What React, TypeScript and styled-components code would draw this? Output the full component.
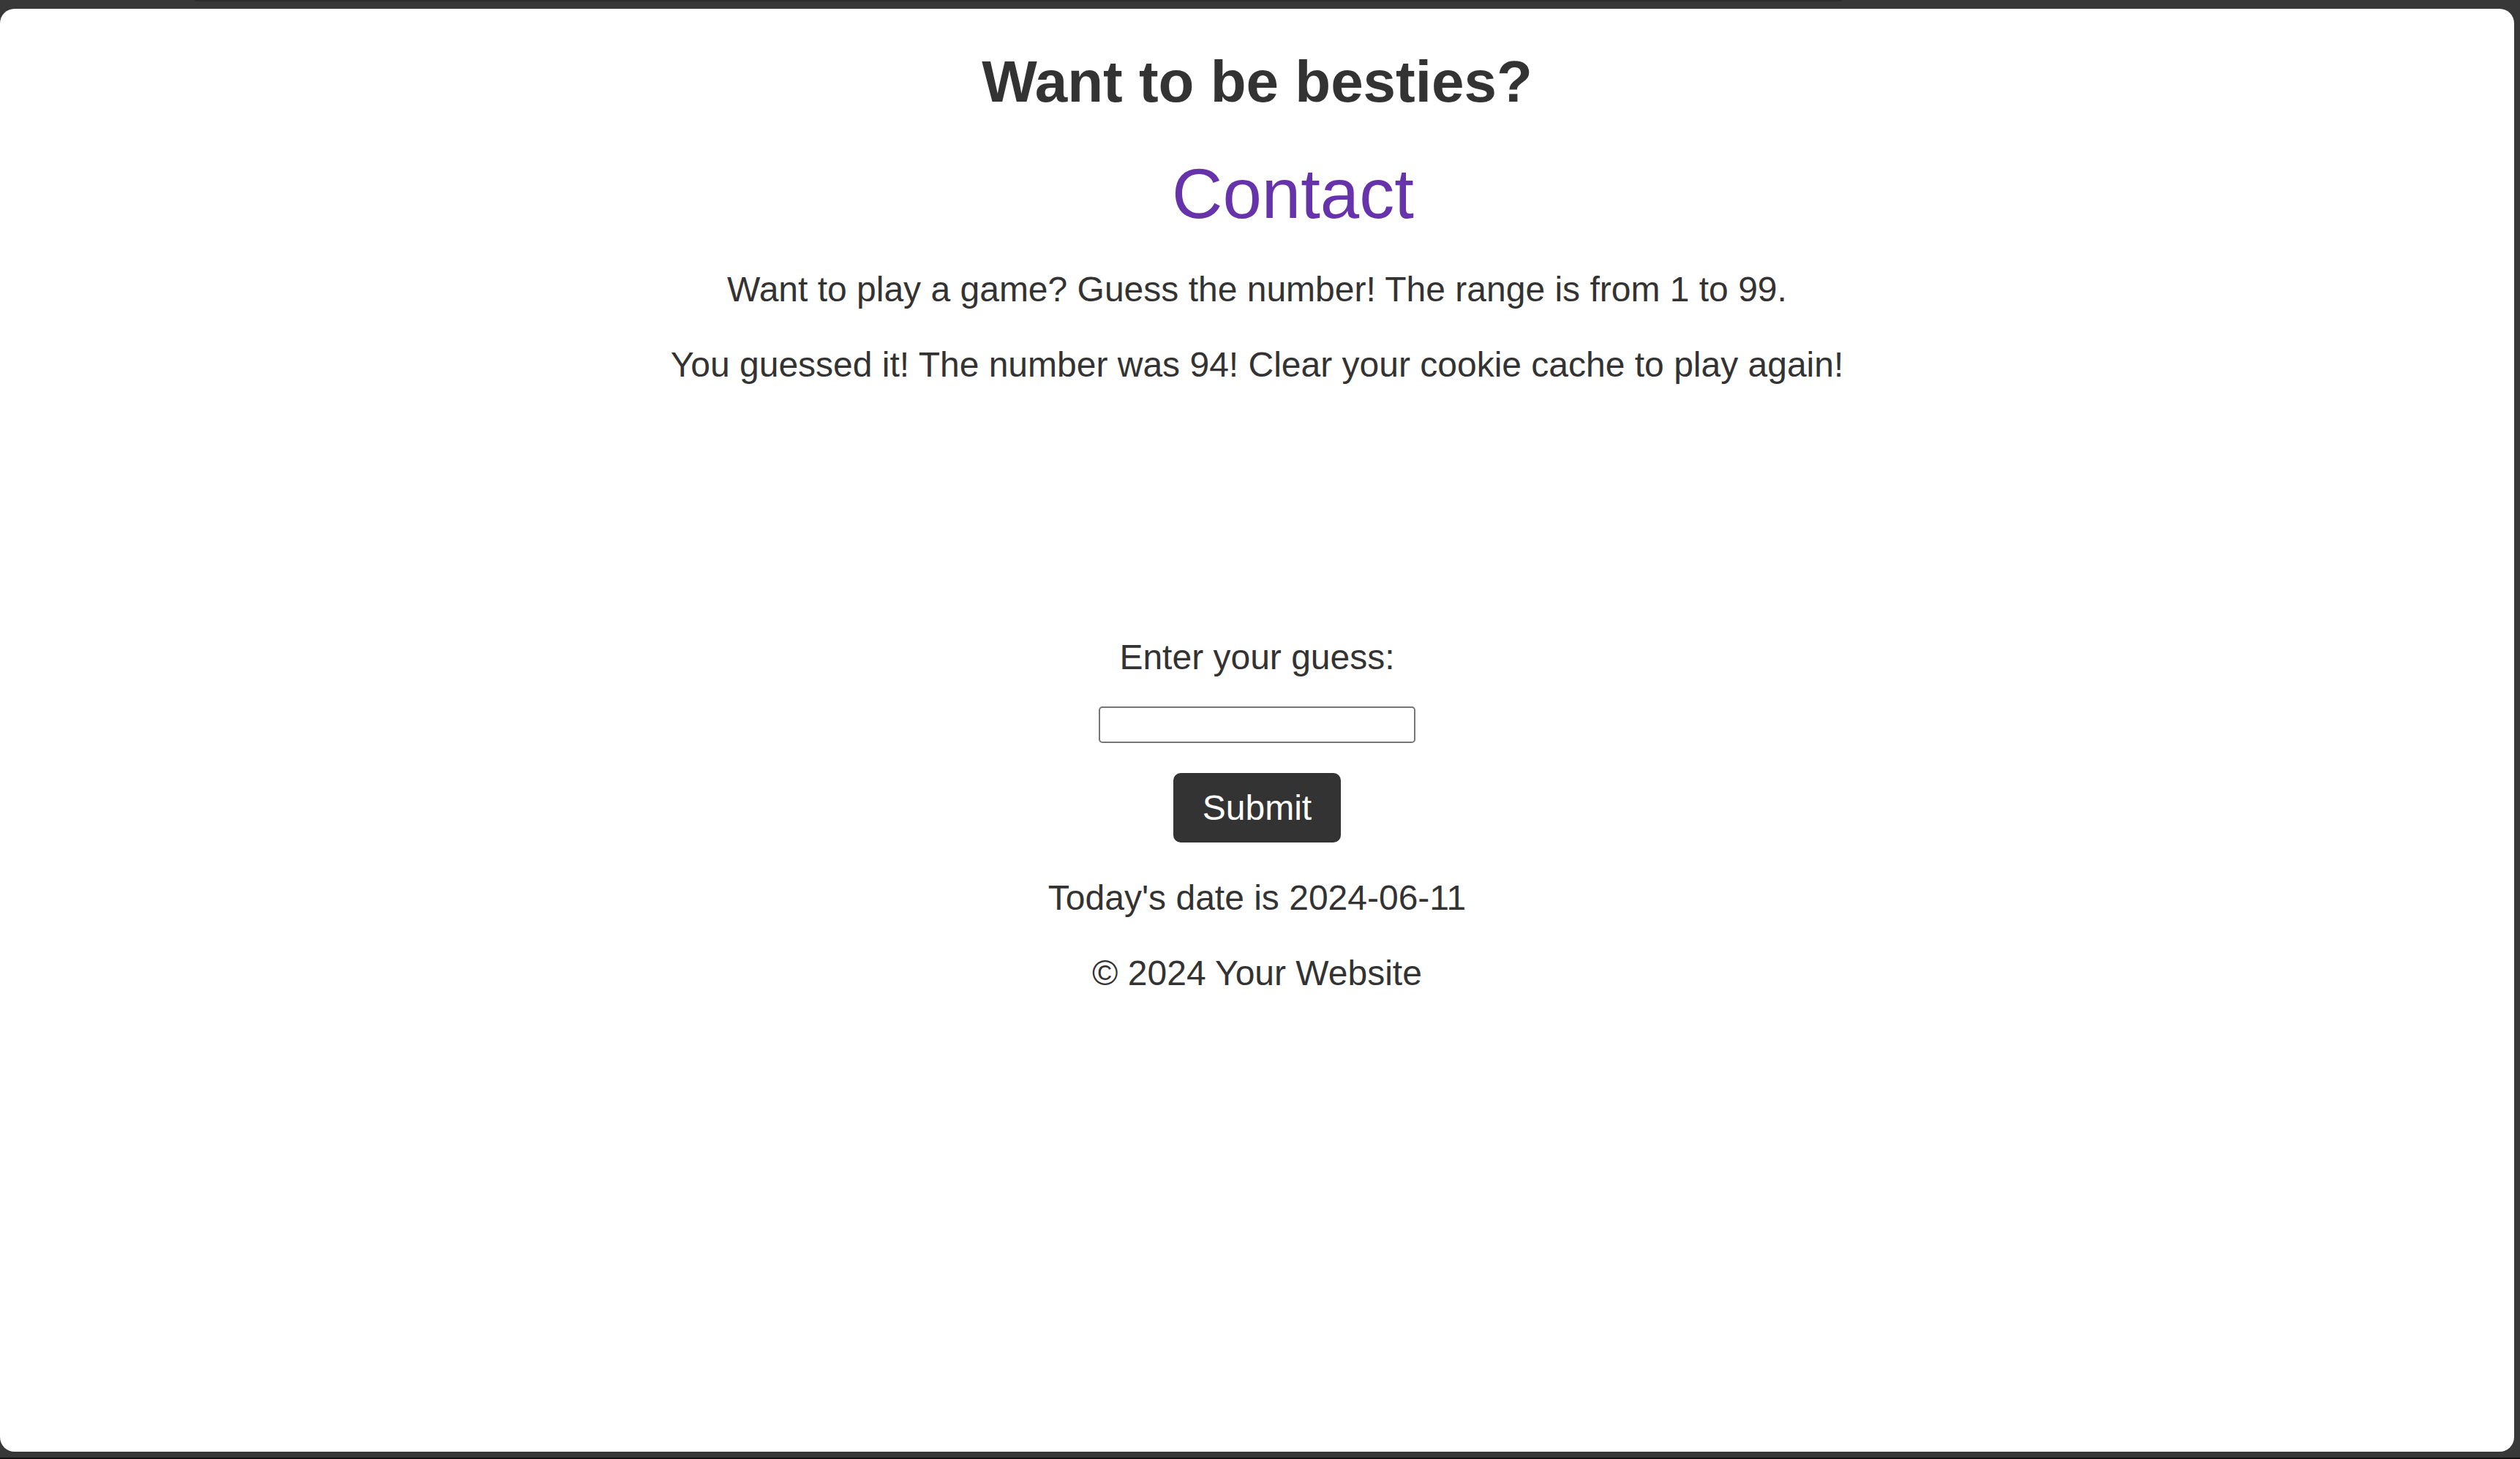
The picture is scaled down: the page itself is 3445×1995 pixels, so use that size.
import React, { useState } from 'react'
import styled, { createGlobalStyle } from 'styled-components'

const GlobalStyle = createGlobalStyle`
  html, body {
    margin: 0;
    padding: 0;
    background: #383838;
  }
  body {
    font-family: "Liberation Sans", Arial, sans-serif;
    color: #333333;
  }
`

const App: React.FC = () => {
  const [guess, setGuess] = useState('')

  return (
    <>
      <GlobalStyle />
      <Page>
        <TopBar>
          <TopStrip />
        </TopBar>
        <Card>
          <Title>Want to be besties?</Title>
          <ContactHeading>Contact</ContactHeading>
          <Text>Want to play a game? Guess the number! The range is from 1 to 99.</Text>
          <Text>You guessed it! The number was 94! Clear your cookie cache to play again!</Text>

          <GuessForm onSubmit={e => e.preventDefault()}>
            <Label htmlFor="guess">Enter your guess:</Label>
            <GuessInput id="guess" value={guess} onChange={e => setGuess(e.target.value)} />
            <SubmitButton type="submit">Submit</SubmitButton>
          </GuessForm>

          <Text>Today's date is 2024-06-11</Text>
          <Text>© 2024 Your Website</Text>
        </Card>
      </Page>
    </>
  )
}

export default App

const Page = styled.div`
  height: 100vh;
  box-sizing: border-box;
  display: flex;
  flex-direction: column;
  padding: 0 8px 8px 0;
  border-bottom: 2px solid #141414;
`

const TopBar = styled.div`
  height: 12px;
  flex-shrink: 0;
  padding-left: 266px;
`

const TopStrip = styled.div`
  width: 2252px;
  height: 2px;
  background: #2c2c2c;
  border-radius: 0 0 4px 4px;
`

const Card = styled.main`
  flex: 1;
  background: #ffffff;
  border-radius: 20px;
  text-align: center;
  overflow: hidden;
  display: flow-root;
`

const Title = styled.h1`
  font-size: 80px;
  font-weight: bold;
  margin: 54px 0 52px;
  color: #333333;
`

const ContactHeading = styled.h2`
  font-size: 96px;
  font-weight: normal;
  color: #6633aa;
  margin: 0 0 48px;
  padding-left: 98px;
`

const Text = styled.p`
  font-size: 48px;
  margin: 48px 0;
`

const GuessForm = styled.form`
  display: flex;
  flex-direction: column;
  align-items: center;
  margin-top: 345px;
`

const Label = styled.label`
  font-size: 48px;
  margin-bottom: 40px;
`

const GuessInput = styled.input`
  width: 433px;
  height: 50px;
  box-sizing: border-box;
  border: 2px solid #767676;
  border-radius: 5px;
  font-size: 32px;
  margin: 0 0 41px;
`

const SubmitButton = styled.button`
  font-family: "Liberation Sans", Arial, sans-serif;
  font-size: 48px;
  color: #ffffff;
  background: #333333;
  border: none;
  border-radius: 10px;
  padding: 20px 40px;
  line-height: normal;
  cursor: pointer;
`
